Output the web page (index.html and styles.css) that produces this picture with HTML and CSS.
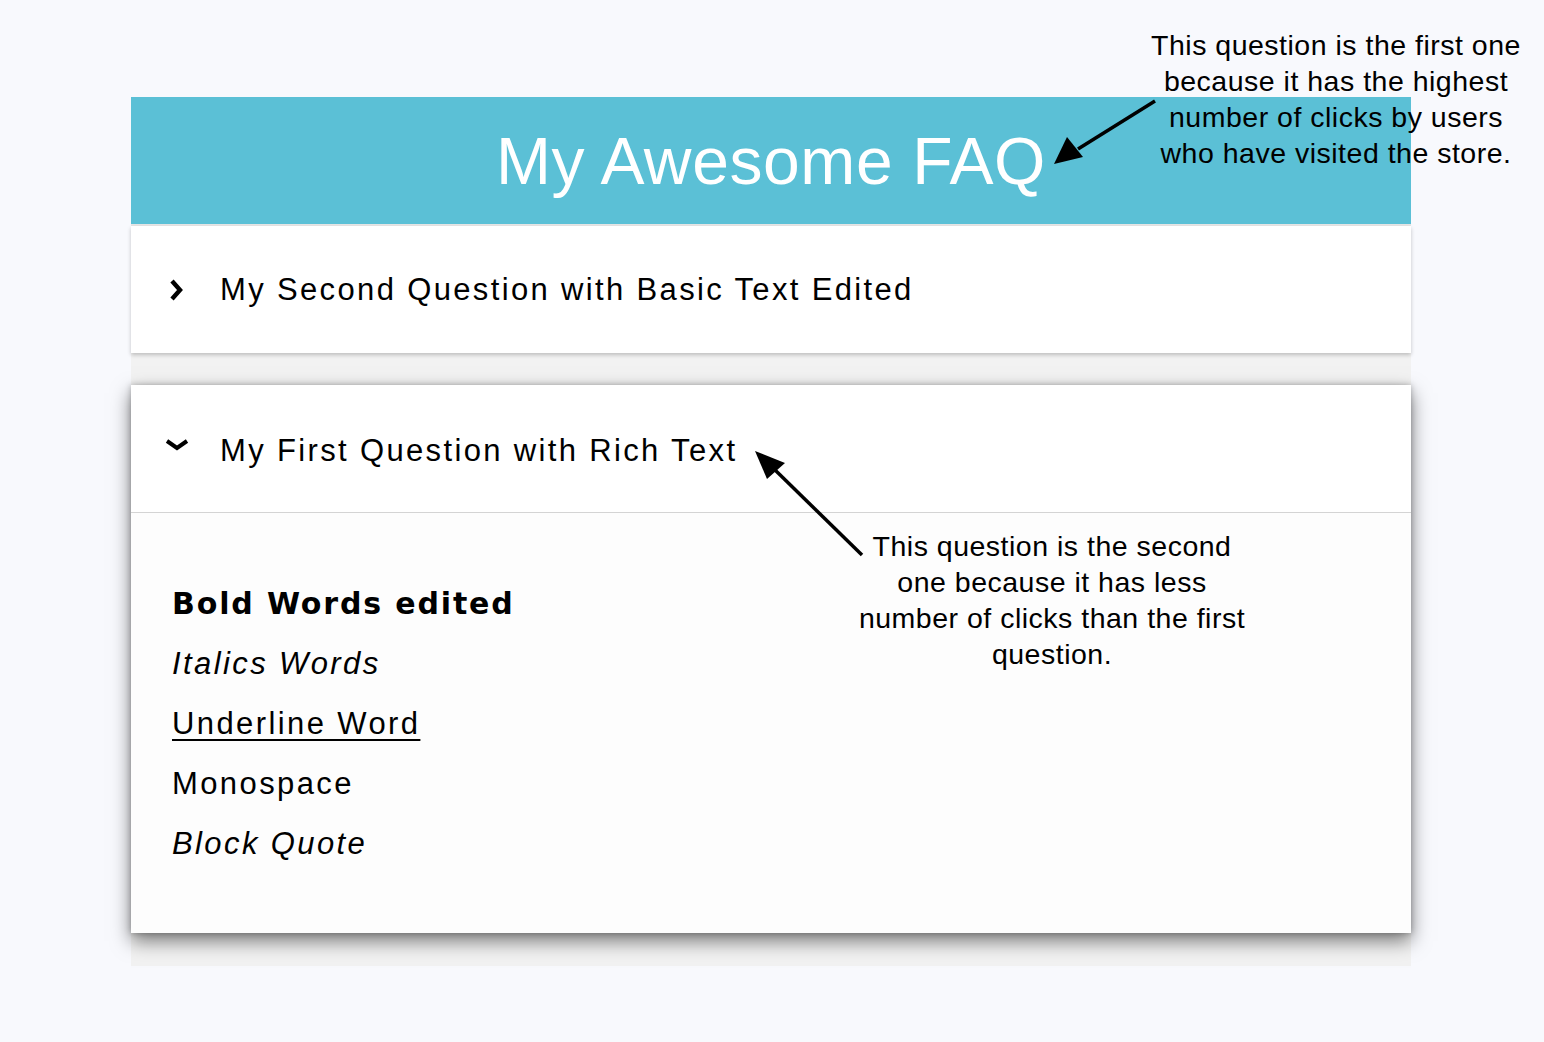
FILE: index.html
```html
<!DOCTYPE html>
<html>
<head>
<meta charset="utf-8">
<link rel="stylesheet" href="styles.css">
</head>
<body>
<div class="page">
  <div class="faq">
    <header class="faq-header"><h1 class="faq-title">My Awesome FAQ</h1></header>
    <section class="card card-first">
      <div class="question">
        <span class="chev chev-right"><svg width="15" height="24" viewBox="0 0 15 24"><path d="M3 3 L11 12 L3 21" fill="none" stroke="#000" stroke-width="4.4" stroke-linejoin="miter"/></svg></span>
        <span class="q-text">My Second Question with Basic Text Edited</span>
      </div>
    </section>
    <section class="card card-open">
      <div class="question">
        <span class="chev chev-down"><svg width="26" height="14" viewBox="0 0 26 14"><path d="M3 3 L13 10 L23 3" fill="none" stroke="#000" stroke-width="4"/></svg></span>
        <span class="q-text">My First Question with Rich Text</span>
      </div>
      <div class="answer">
        <p class="a-line a-bold">Bold Words edited</p>
        <p class="a-line a-italic">Italics Words</p>
        <p class="a-line a-under">Underline Word</p>
        <p class="a-line">Monospace</p>
        <p class="a-line a-italic">Block Quote</p>
      </div>
    </section>
  </div>
  <div class="note note-top">This question is the first one<br>because it has the highest<br>number of clicks by users<br>who have visited the store.</div>
  <div class="note note-mid">This question is the second<br>one because it has less<br>number of clicks than the first<br>question.</div>
  <svg class="arrows" width="1544" height="1042" viewBox="0 0 1544 1042">
    <line x1="1155" y1="101" x2="1078" y2="149" stroke="#000" stroke-width="3.5"/>
    <polygon points="1054,164 1067,137 1083,157" fill="#000"/>
    <line x1="862" y1="555" x2="772" y2="467" stroke="#000" stroke-width="3.5"/>
    <polygon points="755,451 785,463 767,479" fill="#000"/>
  </svg>
</div>
</body>
</html>
```

FILE: styles.css
```css
html, body {
  margin: 0;
  padding: 0;
  background: #f8f9fd;
}
.page {
  position: relative;
  width: 1544px;
  height: 1042px;
  padding: 97px 0 0 131px;
  box-sizing: border-box;
  font-family: "Liberation Sans", Arial, sans-serif;
}
.faq {
  width: 1280px;
  background: #f2f2f2;
  padding-bottom: 33px;
  display: flex;
  flex-direction: column;
}
.faq-header {
  height: 127px;
  background: #5bc0d6;
  border-bottom: 2px solid #e6e6e6;
  display: flex;
  align-items: center;
  justify-content: center;
}
.faq-title {
  margin: 0;
  color: #fff;
  font-weight: 400;
  font-size: 66px;
  letter-spacing: 0.6px;
  line-height: 1;
}
.card {
  background: #fff;
}
.card-first {
  box-shadow: 0 2px 4px rgba(0,0,0,0.22);
  margin-bottom: 32px;
}
.card-open {
  box-shadow: 0 8px 18px rgba(0,0,0,0.5), 0 0 6px rgba(0,0,0,0.25);
}
.question {
  height: 127px;
  display: flex;
  align-items: center;
  padding-left: 33px;
  padding-top: 1px;
  box-sizing: border-box;
}
.card-open .question {
  height: 128px;
  padding-top: 4px;
  border-bottom: 1px solid #d4d4d4;
}
.chev {
  width: 56px;
  display: flex;
}
.chev-right { padding-left: 5px; width: 51px; }
.chev-down { margin-top: -12px; }
.q-text {
  font-size: 31px;
  letter-spacing: 2.35px;
  color: #000;
}
.answer {
  background: #fdfdfd;
  padding: 61px 0 59px 41px;
}
.a-line {
  margin: 0;
  font-size: 31px;
  line-height: 60px;
  letter-spacing: 2.4px;
  color: #000;
}
.a-bold {
  font-family: "DejaVu Sans", sans-serif;
  font-weight: 700;
  font-size: 30px;
  letter-spacing: 1.85px;
}
.a-italic { font-style: italic; }
.a-under { text-decoration: underline; text-underline-offset: 5px; text-decoration-thickness: 2px; }
.note {
  position: absolute;
  font-family: "Liberation Sans", Arial, sans-serif;
  font-size: 28.5px;
  line-height: 36px;
  letter-spacing: 0.5px;
  text-align: center;
  color: #000;
}
.note-top {
  left: 1126px;
  top: 27px;
  width: 420px;
}
.note-mid {
  left: 832px;
  top: 528px;
  width: 440px;
}
.arrows {
  position: absolute;
  left: 0;
  top: 0;
  pointer-events: none;
}
```
